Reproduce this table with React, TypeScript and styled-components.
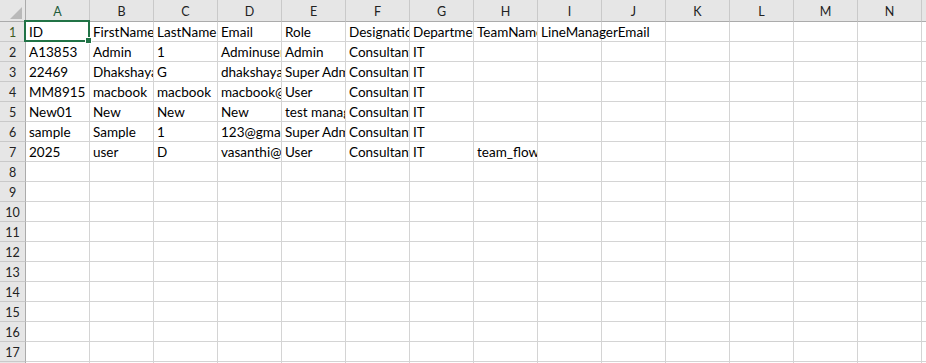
import React from 'react';
import styled, { createGlobalStyle, css } from 'styled-components';

const GlobalStyle = createGlobalStyle`
    html, body {
        margin: 0;
        padding: 0;
        background: #ffffff;
        overflow: hidden;
    }
`;

const COLS = ['A', 'B', 'C', 'D', 'E', 'F', 'G', 'H', 'I', 'J', 'K', 'L', 'M', 'N', 'O'];
const ROW_COUNT = 18;

// sheet contents, row by row (A..I)
const rows: string[][] = [
    ['ID', 'FirstName', 'LastName', 'Email', 'Role', 'Designation', 'Department', 'TeamName', 'LineManagerEmail'],
    ['A13853', 'Admin', '1', 'Adminuser@gmail.com', 'Admin', 'Consultant', 'IT'],
    ['22469', 'Dhakshayani', 'G', 'dhakshayani@gmail.com', 'Super Admin', 'Consultant', 'IT'],
    ['MM8915', 'macbook', 'macbook', 'macbook@gmail.com', 'User', 'Consultant', 'IT'],
    ['New01', 'New', 'New', 'New', 'test manager', 'Consultant', 'IT'],
    ['sample', 'Sample', '1', '123@gmail.com', 'Super Admin', 'Consultant', 'IT'],
    ['2025', 'user', 'D', 'vasanthi@gmail.com', 'User', 'Consultant', 'IT', 'team_flowers'],
];

// cells whose text runs on into the empty cells to their right
const spills = new Set(['0:8']);

const Sheet = styled.div`
    display: grid;
    grid-template-columns: 26px repeat(${COLS.length}, 64px);
    grid-template-rows: 22px repeat(${ROW_COUNT}, 20px);
    width: 926px;
    height: 363px;
    overflow: hidden;
    font-family: Lato, 'Liberation Sans', sans-serif;
    color: #000000;
    cursor: cell;
`;

const headBase = css`
    box-sizing: border-box;
    background: #e6e6e6;
    display: flex;
    align-items: center;
    justify-content: center;
    font-size: 12.5px;
    color: #222222;
`;

const Corner = styled.div`
    ${headBase};
    position: relative;
    border-right: 1px solid #ababab;
    border-bottom: 1px solid #ababab;
`;

const CornerMark = styled.span`
    position: absolute;
    right: 3px;
    bottom: 2px;
    width: 12px;
    height: 12px;
    background: #b9b9b9;
    clip-path: polygon(100% 0, 100% 100%, 0 100%);
`;

const ColHead = styled.div<{ $active?: boolean }>`
    ${headBase};
    padding-top: 1px;
    border-right: 1px solid #c9c9c9;
    border-bottom: 1px solid #ababab;
    ${p => p.$active && css`
        color: #1e5c3a;
    `}
`;

const RowHead = styled.div<{ $active?: boolean }>`
    ${headBase};
    padding-top: 2px;
    border-right: 1px solid #ababab;
    border-bottom: 1px solid #c9c9c9;
    ${p => p.$active && css`
        color: #3f5a1e;
    `}
`;

const Cell = styled.div<{ $open?: boolean }>`
    box-sizing: border-box;
    position: relative;
    border-right: 1px solid #d4d4d4;
    border-bottom: 1px solid #d4d4d4;
    padding: 1px 3px 0;
    font-size: 13.5px;
    line-height: 19px;
    white-space: nowrap;
    overflow: ${p => (p.$open ? 'visible' : 'hidden')};
`;

// green outline round the active cell, sitting over the grid lines
const Selection = styled.div`
    position: absolute;
    top: -2px;
    left: -2px;
    right: -1px;
    bottom: -1px;
    border: 2px solid #217346;
    pointer-events: none;
    z-index: 2;
`;

const FillHandle = styled.span`
    position: absolute;
    right: -4px;
    bottom: -4px;
    width: 5px;
    height: 5px;
    background: #217346;
    border: 1px solid #ffffff;
`;

export default function App() {
    return (
        <>
            <GlobalStyle />
            <Sheet>
                <Corner>
                    <CornerMark />
                </Corner>
                {COLS.map(c => (
                    <ColHead key={c} $active={c === 'A'}>
                        {c}
                    </ColHead>
                ))}
                {Array.from({ length: ROW_COUNT }, (_, r) => (
                    <React.Fragment key={r}>
                        <RowHead $active={r === 0}>{r + 1}</RowHead>
                        {COLS.map((c, ci) => {
                            const text = rows[r]?.[ci] ?? '';
                            const active = r === 0 && ci === 0;
                            return (
                                <Cell key={c} $open={active || spills.has(`${r}:${ci}`)}>
                                    {text}
                                    {active && (
                                        <Selection>
                                            <FillHandle />
                                        </Selection>
                                    )}
                                </Cell>
                            );
                        })}
                    </React.Fragment>
                ))}
            </Sheet>
        </>
    );
}
